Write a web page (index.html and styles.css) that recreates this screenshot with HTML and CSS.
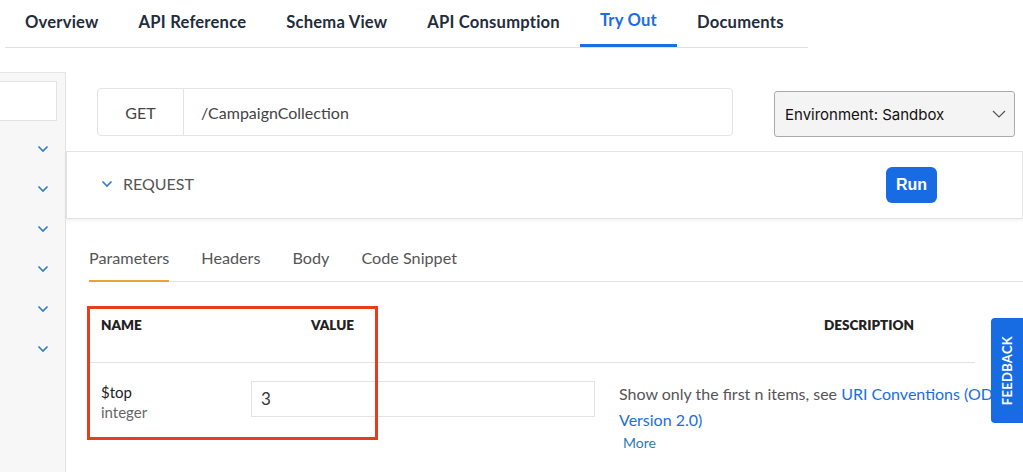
FILE: index.html
```html
<!DOCTYPE html>
<html lang="en">
<head>
<meta charset="utf-8">
<title>Try Out</title>
<link rel="stylesheet" href="styles.css">
</head>
<body>
<header class="topnav">
  <nav class="tabs">
    <a class="tab">Overview</a>
    <a class="tab">API Reference</a>
    <a class="tab">Schema View</a>
    <a class="tab">API Consumption</a>
    <a class="tab active">Try Out</a>
    <a class="tab">Documents</a>
  </nav>
</header>
<div class="layout">
  <aside class="sidebar">
    <div class="search"></div>
    <ul class="side-list">
      <li><svg class="chev" viewBox="0 0 12 8"><path d="M1.5 1.5 6 6l4.5-4.5"/></svg></li>
      <li><svg class="chev" viewBox="0 0 12 8"><path d="M1.5 1.5 6 6l4.5-4.5"/></svg></li>
      <li><svg class="chev" viewBox="0 0 12 8"><path d="M1.5 1.5 6 6l4.5-4.5"/></svg></li>
      <li><svg class="chev" viewBox="0 0 12 8"><path d="M1.5 1.5 6 6l4.5-4.5"/></svg></li>
      <li><svg class="chev" viewBox="0 0 12 8"><path d="M1.5 1.5 6 6l4.5-4.5"/></svg></li>
      <li><svg class="chev" viewBox="0 0 12 8"><path d="M1.5 1.5 6 6l4.5-4.5"/></svg></li>
    </ul>
  </aside>
  <main class="content">
    <div class="endpoint-row">
      <div class="endpoint">
        <span class="method">GET</span>
        <span class="path">/CampaignCollection</span>
      </div>
      <div class="env-select">
        <span>Environment: Sandbox</span>
        <svg class="env-chev" viewBox="0 0 14 8"><path d="M1 1l6 6 6-6"/></svg>
      </div>
    </div>
    <section class="request-panel">
      <div class="req-title">
        <svg class="chev" viewBox="0 0 12 8"><path d="M1.5 1.5 6 6l4.5-4.5"/></svg>
        <span>REQUEST</span>
      </div>
      <button class="run">Run</button>
    </section>
    <div class="req-tabs">
      <span class="req-tab active">Parameters</span>
      <span class="req-tab">Headers</span>
      <span class="req-tab">Body</span>
      <span class="req-tab">Code Snippet</span>
    </div>
    <div class="param-table">
      <div class="param-head">
        <span class="h-name">NAME</span>
        <span class="h-value">VALUE</span>
        <span class="h-desc">DESCRIPTION</span>
      </div>
      <div class="param-row">
        <div class="p-name">
          <div class="p-title">$top</div>
          <div class="p-type">integer</div>
        </div>
        <div class="p-value"><div class="value-input">3</div></div>
        <div class="p-desc">
          <div class="desc-text">Show only the first n items, see <a class="link">URI Conventions (OData Version 2.0)</a></div>
          <a class="more">More</a>
        </div>
      </div>
    </div>
  </main>
</div>
<div class="highlight"></div>
<div class="feedback"><span>FEEDBACK</span></div>
</body>
</html>
```
FILE: styles.css
```css
* { box-sizing: border-box; }
html, body {
  margin: 0;
  padding: 0;
  width: 1023px;
  height: 472px;
  overflow: hidden;
  background: #fff;
  font-family: Lato, "Open Sans", sans-serif;
  color: #333;
}
ul { list-style: none; margin: 0; padding: 0; }

.topnav { padding-left: 5px; }
.tabs {
  display: flex;
  width: 803px;
  height: 48px;
  border-bottom: 1px solid #e0e0e0;
}
.tab {
  position: relative;
  padding: 12px 20px 0;
  font-size: 16.6px;
  letter-spacing: 0.2px;
  font-weight: 700;
  line-height: 20px;
  color: #1f2d3d;
  white-space: nowrap;
}
.tab.active {
  color: #1a6de3;
  padding-top: 10px;
}
.tab.active::after {
  content: "";
  position: absolute;
  left: 0;
  right: 0;
  bottom: 0;
  height: 3px;
  background: #1a6de3;
}

.layout {
  display: flex;
  margin-top: 24px;
  height: 400px;
}
.sidebar {
  width: 66px;
  flex: none;
  background: #f7f7f7;
  border-top: 1px solid #e6e6e6;
  border-right: 1px solid #e3e3e3;
  padding-top: 8px;
}
.search {
  width: 57px;
  height: 40px;
  background: #fff;
  border: 1px solid #e3e3e3;
  border-left: none;
}
.side-list { padding-top: 16px; }
.side-list li {
  height: 40px;
  padding-left: 37px;
}
.chev {
  width: 12px;
  height: 8px;
  fill: none;
  stroke: #2f7cc3;
  stroke-width: 1.6;
}

.content {
  flex: none;
  width: 1000px;
  padding-top: 16px;
}
.endpoint-row {
  display: flex;
  align-items: flex-start;
  padding-left: 31px;
  gap: 41px;
}
.endpoint {
  display: flex;
  width: 636px;
  height: 48px;
  border: 1px solid #e3e3e3;
  border-radius: 4px;
  font-size: 16px;
  color: #444;
}
.method {
  width: 86px;
  border-right: 1px solid #e3e3e3;
  display: flex;
  align-items: center;
  justify-content: center;
}
.path {
  display: flex;
  align-items: center;
  padding-left: 17px;
}
.env-select {
  margin-top: 3px;
  width: 241px;
  height: 46px;
  background: #f4f4f4;
  border: 1px solid #ababab;
  border-radius: 3px;
  display: flex;
  align-items: center;
  justify-content: space-between;
  padding: 0 8px 0 10px;
  font-family: Inter, "Noto Sans", sans-serif;
  font-size: 15px;
  color: #111;
}
.env-chev {
  width: 14px;
  height: 8px;
  fill: none;
  stroke: #555;
  stroke-width: 1.2;
}

.request-panel {
  margin-top: 14px;
  width: 957px;
  height: 68px;
  border: 1px solid #e3e3e3;
  box-shadow: 0 2px 3px rgba(0,0,0,0.05);
  display: flex;
  align-items: center;
  justify-content: space-between;
  padding: 0 85px 0 34px;
}
.req-title {
  display: flex;
  align-items: center;
  gap: 10px;
  font-size: 16px;
  color: #555;
  margin-top: -3px;
}
.run {
  width: 51px;
  height: 36px;
  border: none;
  border-radius: 6px;
  background: #176be3;
  color: #fff;
  font-family: "Liberation Sans", Arial, sans-serif;
  font-weight: 700;
  font-size: 16px;
  padding: 0;
}

.req-tabs {
  display: flex;
  gap: 32px;
  margin-top: 20px;
  margin-left: 23px;
  border-bottom: 1px solid #e3e3e3;
}
.req-tab {
  height: 43px;
  padding-top: 9px;
  line-height: 20px;
  font-size: 16.2px;
  color: #555;
  margin-bottom: -1px;
  border-bottom: 2px solid transparent;
}
.req-tab.active { border-bottom-color: #e8a536; }

.param-table { margin-left: 23px; }
.param-head {
  display: flex;
  width: 886px;
  height: 81px;
  padding-top: 35px;
  border-bottom: 1px solid #e3e3e3;
  font-size: 13.5px;
  font-weight: 800;
  color: #222;
  line-height: 16px;
}
.h-name { padding-left: 12px; width: 222px; }
.h-value { width: 513px; }
.param-row {
  display: flex;
  padding-top: 18px;
}
.p-name {
  width: 162px;
  padding-left: 12px;
  padding-top: 1px;
}
.p-title { font-size: 15px; color: #222; line-height: 20px; }
.p-type { font-size: 15px; color: #666; line-height: 20px; }
.p-value { width: 368px; }
.value-input {
  width: 344px;
  height: 36px;
  border: 1px solid #e3e3e3;
  padding-left: 9px;
  font-size: 17px;
  line-height: 34px;
  color: #333;
}
.p-desc { width: 445px; }
.desc-text {
  font-size: 16px;
  line-height: 26px;
  color: #555;
}
.link { color: #1a6de3; }
.more {
  display: block;
  padding-left: 4px;
  font-size: 14px;
  line-height: 20px;
  color: #2b7ab5;
}

.highlight {
  position: absolute;
  left: 87px;
  top: 306px;
  width: 291px;
  height: 134px;
  border: 3px solid #e93c1f;
}
.feedback {
  position: absolute;
  left: 991px;
  top: 318px;
  width: 40px;
  height: 105px;
  background: #176be3;
  border-radius: 4px;
  display: flex;
  align-items: center;
  padding-left: 8px;
}
.feedback span {
  display: block;
  writing-mode: vertical-rl;
  transform: rotate(180deg);
  color: #fff;
  font-size: 13px;
  font-weight: 700;
  letter-spacing: 0.3px;
}
```
